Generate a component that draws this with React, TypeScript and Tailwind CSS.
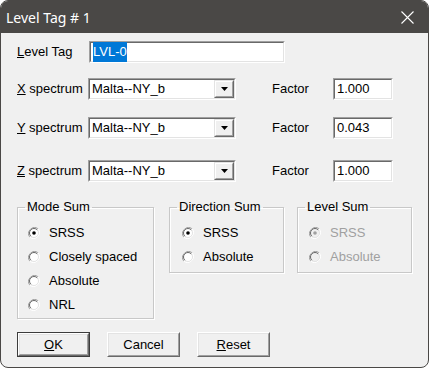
import React from 'react';

const font = { fontFamily: '"Liberation Sans", Arial, sans-serif' };

// Sunken edit box (classic Win32 look)
const Edit: React.FC<{ className?: string; children?: React.ReactNode }> = ({ className = '', children }) => (
  <div className={`border border-t-[#a0a0a0] border-l-[#a0a0a0] border-b-white border-r-white ${className}`}>
    <div className="h-full border border-t-[#696969] border-l-[#696969] border-b-[#e3e3e3] border-r-[#e3e3e3] bg-white flex items-center pl-[2px] text-[13px] text-black">
      {children}
    </div>
  </div>
);

const Combo: React.FC<{ value: string }> = ({ value }) => (
  <div className="w-[148px] h-[22px] border border-t-[#a0a0a0] border-l-[#a0a0a0] border-b-white border-r-white">
    <div className="h-full border border-t-[#696969] border-l-[#696969] border-b-[#e3e3e3] border-r-[#e3e3e3] bg-white flex items-center">
      <span className="flex-1 pl-[2px] text-[13px]">{value}</span>
      <div className="w-[20px] h-[18px] border border-t-[#e3e3e3] border-l-[#e3e3e3] border-b-[#696969] border-r-[#696969]">
        <div className="h-full border border-t-white border-l-white border-b-[#a0a0a0] border-r-[#a0a0a0] bg-[#f0f0f0] flex items-center justify-center">
          <svg width="7" height="4" viewBox="0 0 7 4">
            <path d="M0 0h7L3.5 4z" fill="#000" />
          </svg>
        </div>
      </div>
    </div>
  </div>
);

const Radio: React.FC<{ label: string; checked?: boolean; disabled?: boolean }> = ({ label, checked, disabled }) => (
  <div className="flex items-center h-[24px] gap-[9px]">
    <svg width="12" height="12" viewBox="0 0 12 12">
      <path d="M10.2 1.8A6 6 0 0 0 1.8 10.2" stroke="#a0a0a0" fill="none" />
      <path d="M1.8 10.2A6 6 0 0 0 10.2 1.8" stroke="#ffffff" fill="none" />
      <circle cx="6" cy="6" r="4.5" fill={disabled ? '#f0f0f0' : '#fff'} stroke="#e3e3e3" />
      <path d="M9.2 2.8A4.5 4.5 0 0 0 2.8 9.2" stroke="#696969" fill="none" />
      {checked && <circle cx="6" cy="6" r="1.8" fill={disabled ? '#a0a0a0' : '#000'} />}
    </svg>
    <span className={`text-[13px] ${disabled ? 'text-[#a0a0a0]' : 'text-black'}`}>{label}</span>
  </div>
);

const Group: React.FC<{ title: string; className: string; inner?: string; children: React.ReactNode }> = ({ title, className, inner = 'pl-[10px]', children }) => (
  <fieldset className={`border border-[#c8c8c8] shadow-[1px_1px_0_#fff,inset_1px_1px_0_#fff] ${className}`}>
    <legend className="ml-[7px] px-[2px] text-[13px] leading-[14px] text-black">{title}</legend>
    <div className={`flex flex-col mt-[7px] ${inner}`}>{children}</div>
  </fieldset>
);

const Button: React.FC<{ children: React.ReactNode; isDefault?: boolean }> = ({ children, isDefault }) => (
  <div className={`w-[73px] h-[25px] ${isDefault ? 'border border-[#3c3c3c]' : ''}`}>
    <div className="h-full border border-t-white border-l-white border-b-[#696969] border-r-[#696969]">
      <div className="h-full border border-t-[#e3e3e3] border-l-[#e3e3e3] border-b-[#a0a0a0] border-r-[#a0a0a0] bg-[#f0f0f0] flex items-center justify-center text-[13px]">
        {children}
      </div>
    </div>
  </div>
);

const SpectrumRow: React.FC<{ axis: string; factor: string; className: string }> = ({ axis, factor, className }) => (
  <div className={`flex items-center ${className}`}>
    <span className="w-[71px] text-[13px]">
      <u>{axis}</u> spectrum
    </span>
    <Combo value="Malta--NY_b" />
    <span className="ml-[36px] w-[61px] text-[13px]">Factor</span>
    <Edit className="w-[60px] h-[22px]">{factor}</Edit>
  </div>
);

export default function App() {
  return (
    <div className="w-[429px] h-[368px] bg-white" style={font}>
      <div className="w-full h-full rounded-[8px] overflow-hidden border border-[#4a4846] flex flex-col bg-[#f0f0f0]">
        <div className="h-[32px] shrink-0 bg-[#4a4846] flex items-center justify-between pl-[5px] pr-[14px]">
          <span className="text-white text-[14px]" style={{ fontFamily: '"Noto Sans", "Open Sans", sans-serif' }}>
            Level Tag # 1
          </span>
          <svg width="13" height="13" viewBox="0 0 13 13">
            <path d="M0.5 0.5l12 12M12.5 0.5l-12 12" stroke="#fff" strokeWidth="1.1" />
          </svg>
        </div>

        <div className="flex-1 flex flex-col pl-[16px] text-black">
          <div className="flex items-center mt-[8px]">
            <span className="w-[72px] text-[13px]">
              <u>L</u>evel Tag
            </span>
            <Edit className="w-[196px] h-[22px]">
              <span className="bg-[#0078d7] text-white">LVL-0</span>
            </Edit>
          </div>

          <SpectrumRow axis="X" factor="1.000" className="mt-[15px]" />
          <SpectrumRow axis="Y" factor="0.043" className="mt-[17px]" />
          <SpectrumRow axis="Z" factor="1.000" className="mt-[21px]" />

          <div className="flex items-start mt-[18px] gap-[15px]">
            <Group title="Mode Sum" className="w-[137px] h-[119px]">
              <Radio label="SRSS" checked />
              <Radio label="Closely spaced" />
              <Radio label="Absolute" />
              <Radio label="NRL" />
            </Group>
            <Group title="Direction Sum" className="w-[115px] h-[73px]" inner="pl-[12px]">
              <Radio label="SRSS" checked />
              <Radio label="Absolute" />
            </Group>
            <Group title="Level Sum" className="w-[115px] h-[73px] ml-[-2px]" inner="pl-[11px]">
              <Radio label="SRSS" checked disabled />
              <Radio label="Absolute" disabled />
            </Group>
          </div>

          <div className="flex gap-[17px] mt-[13px]">
            <Button isDefault>
              <u>O</u>K
            </Button>
            <Button>Cancel</Button>
            <Button>
              <u>R</u>eset
            </Button>
          </div>
        </div>
      </div>
    </div>
  );
}
